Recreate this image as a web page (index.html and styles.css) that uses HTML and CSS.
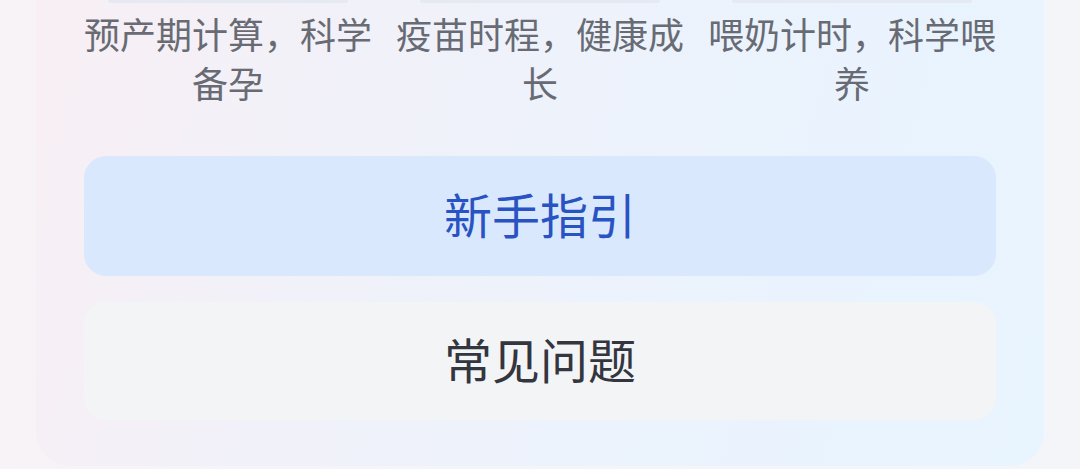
FILE: index.html
```html
<!DOCTYPE html>
<html lang="zh">
<head>
<meta charset="utf-8">
<link rel="stylesheet" href="styles.css">
</head>
<body>
<div class="page">
  <section class="card">
    <div class="features">
      <div class="feature">
        <div class="thumb"></div>
        <p class="desc">预产期计算，科学备孕</p>
      </div>
      <div class="feature">
        <div class="thumb"></div>
        <p class="desc">疫苗时程，健康成长</p>
      </div>
      <div class="feature">
        <div class="thumb"></div>
        <p class="desc">喂奶计时，科学喂养</p>
      </div>
    </div>
    <div class="actions">
      <button class="btn btn-primary">新手指引</button>
      <button class="btn btn-secondary">常见问题</button>
    </div>
  </section>
</div>
</body>
</html>
```

FILE: styles.css
```css
* { box-sizing: border-box; }
html, body { margin: 0; padding: 0; }
body {
  width: 1080px;
  height: 469px;
  overflow: hidden;
  background: linear-gradient(90deg, #f7f3f6 0%, #f4f5f9 40%, #f4f5f8 100%);
  font-family: "Noto Sans CJK SC", "Noto Sans", sans-serif;
}
.page {
  padding: 0 36px;
}
.card {
  width: 1008px;
  height: 466px;
  border-radius: 0 0 34px 34px;
  background: linear-gradient(105deg, #f8eff4 0%, #f1f1f9 30%, #ebf3fd 65%, #e8f4fe 100%);
  padding: 0 48px;
  display: flex;
  flex-direction: column;
}
.features {
  display: flex;
  justify-content: space-between;
}
.feature {
  width: 288px;
  display: flex;
  flex-direction: column;
  align-items: center;
}
.thumb {
  width: 240px;
  height: 3px;
  border-radius: 0 0 8px 8px;
  background: #e4e9f2;
}
.desc {
  margin: 6px 0 0;
  font-size: 36px;
  line-height: 49px;
  color: #686b73;
  text-align: center;
}
.actions {
  margin-top: 49px;
  display: flex;
  flex-direction: column;
  gap: 26px;
}
.btn {
  border: none;
  border-radius: 22px;
  font-family: "Noto Sans CJK SC", "Noto Sans", sans-serif;
  font-size: 48px;
  padding: 0 0 6px;
}
.btn-primary {
  height: 120px;
  background: #dae8fd;
  color: #2953c2;
}
.btn-secondary {
  height: 118px;
  background: #f3f4f6;
  color: #33363e;
}
```
